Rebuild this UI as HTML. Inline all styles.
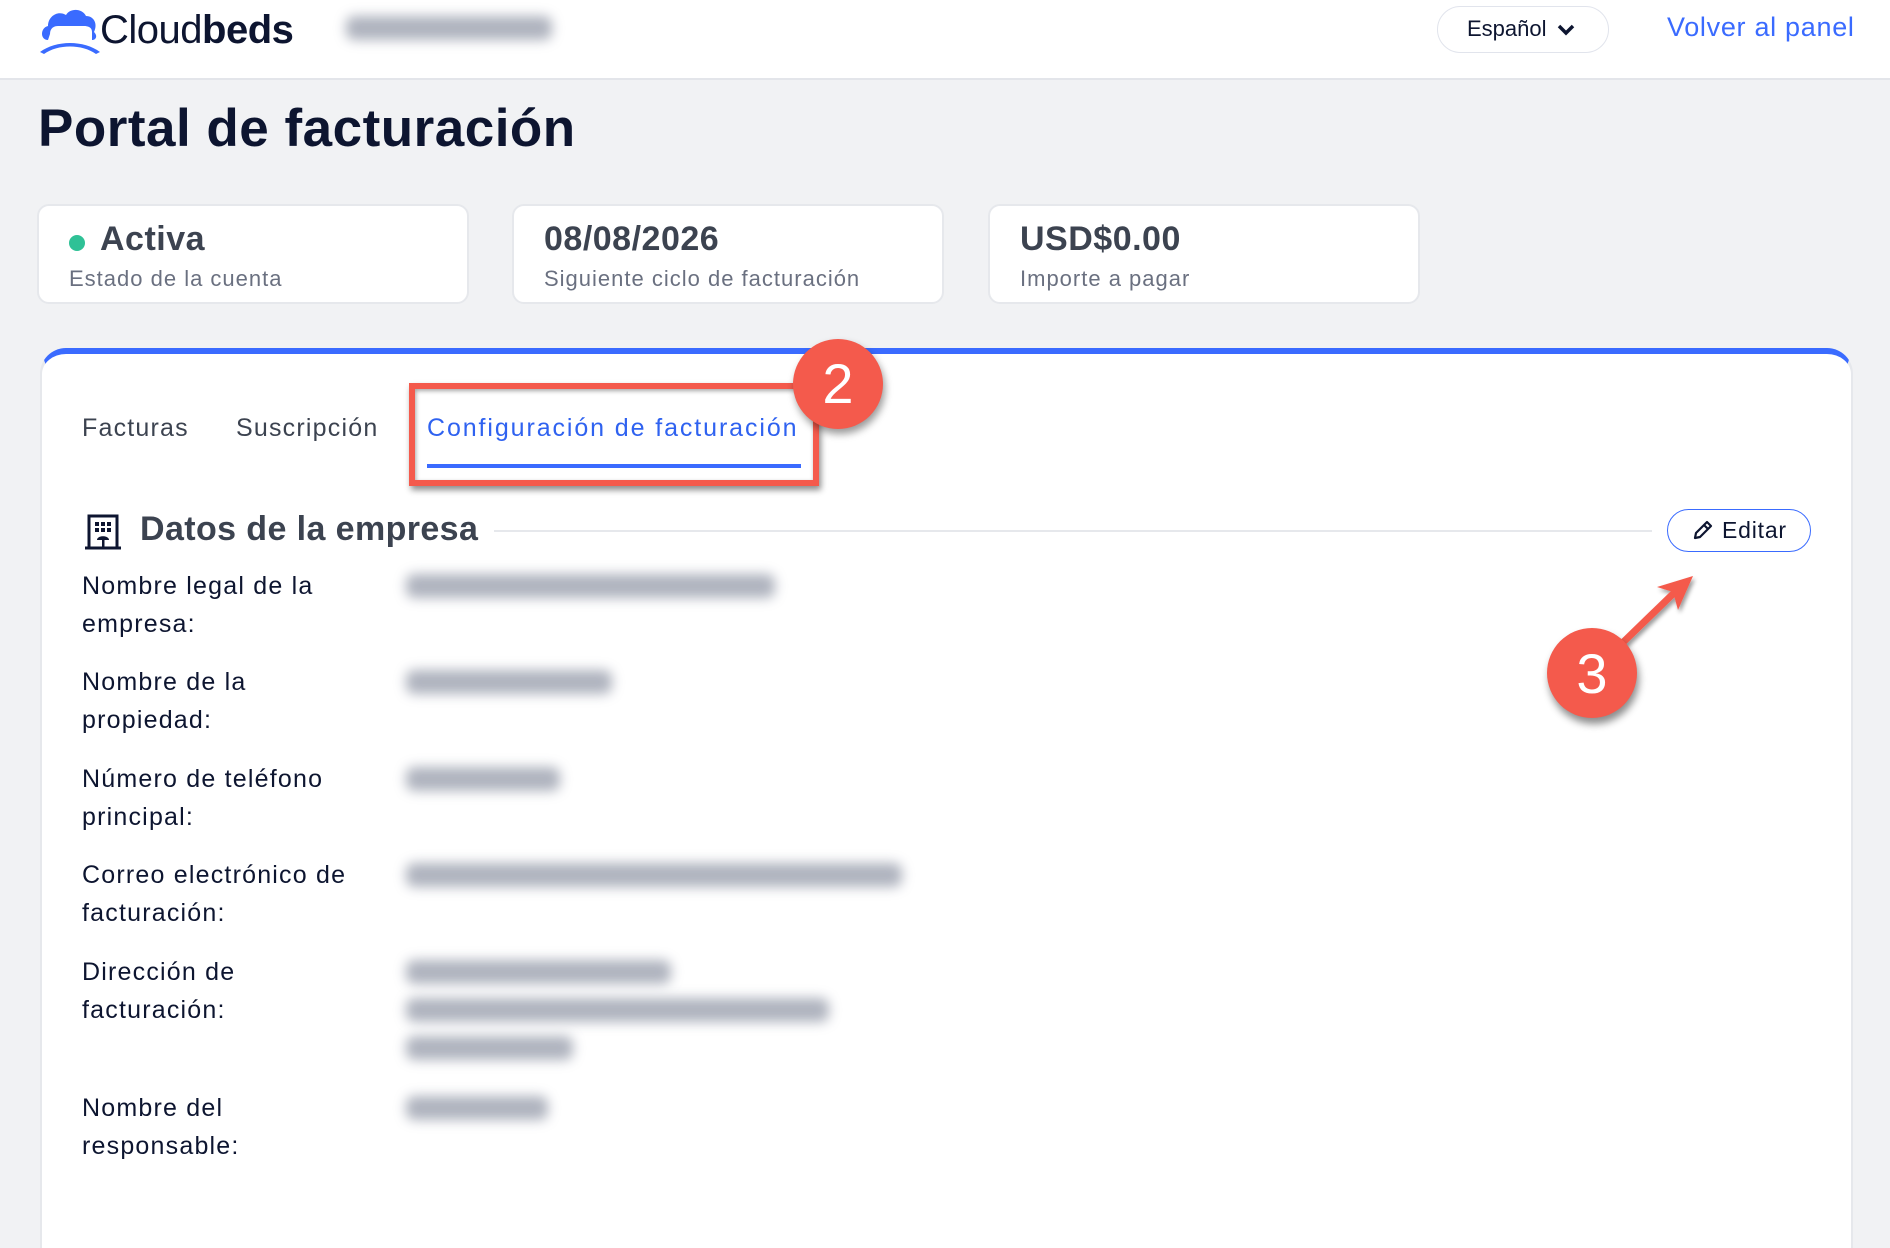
<!DOCTYPE html>
<html><head><meta charset="utf-8"><style>
*{margin:0;padding:0;box-sizing:border-box}
body{width:1890px;height:1174px;overflow:hidden;background:#f1f2f4;font-family:"Liberation Sans",sans-serif;position:relative;color:#0d1530}
.abs{position:absolute}
.hdr{left:0;top:0;width:1890px;height:80px;background:#fff;border-bottom:2px solid #e3e5ea}
.blur{position:absolute;background:#8d93a3;border-radius:8px;filter:blur(6px);opacity:.7}
.card{position:absolute;top:204px;width:432px;height:100px;background:#fff;border:2px solid #e6e8ec;border-radius:12px}
.card .v{position:absolute;left:30px;top:14px;font-size:34px;font-weight:bold;color:#3c4350;letter-spacing:.5px}
.card .l{position:absolute;left:30px;top:60px;font-size:22px;color:#6a7080;letter-spacing:1px}
.lbl{position:absolute;left:82px;font-size:25px;line-height:38px;color:#0d1530;letter-spacing:1.2px}
.tab{position:absolute;top:414px;font-size:25px;color:#3c4350;letter-spacing:1.2px}
</style></head><body>
<div class="abs hdr"></div>
<svg class="abs" style="left:38px;top:6px" width="64" height="48" viewBox="0 0 64 48">
<path d="M10 34 C2 34 2 22 10 20 C10 10 20 4 28 9 C32 2 44 2 48 10 C56 10 60 18 56 26 C60 30 58 34 54 34 L54 26 C54 20 48 20 44 20 L20 20 C16 20 12 22 12 28 Z" fill="#3a6bff"/>
<path d="M2 46 C18 34 46 34 62 46 L58 48 C44 38 20 38 6 48 Z" fill="#3a6bff"/>
</svg>
<div class="abs" style="left:100px;top:8px;font-size:40px;letter-spacing:-0.5px;color:#0d1530">Cloud<b>beds</b></div>
<div class="blur" style="left:346px;top:16px;width:206px;height:24px"></div>
<div class="abs" style="left:1437px;top:6px;width:172px;height:47px;border:1.5px solid #e1e4ec;border-radius:24px;font-size:22px;line-height:44px;padding-left:29px;color:#0d1530">Español <svg width="18" height="12" viewBox="0 0 18 12" style="margin-left:4px"><path d="M2 2 L9 9 L16 2" stroke="#0d1530" stroke-width="3.5" fill="none"/></svg></div>
<div class="abs" style="left:1667px;top:12px;font-size:27px;color:#3a6bff;letter-spacing:.7px">Volver al panel</div>
<div class="abs" style="left:38px;top:98px;font-size:53px;font-weight:bold;color:#0d1530;letter-spacing:.5px">Portal de facturación</div>
<div class="card" style="left:37px"><div class="abs" style="left:30px;top:29px;width:16px;height:16px;border-radius:50%;background:#2fc196"></div><div class="v" style="left:61px">Activa</div><div class="l">Estado de la cuenta</div></div>
<div class="card" style="left:512px"><div class="v">08/08/2026</div><div class="l">Siguiente ciclo de facturación</div></div>
<div class="card" style="left:988px"><div class="v">USD$0.00</div><div class="l">Importe a pagar</div></div>
<div class="abs" style="left:40px;top:348px;width:1813px;height:900px;background:#fff;border-top:6px solid #3a6bff;border-radius:26px 26px 0 0;border-right:2px solid #e6e8ec;border-left:2px solid #e6e8ec"></div>
<div class="tab" style="left:82px">Facturas</div>
<div class="tab" style="left:236px">Suscripción</div>
<div class="tab" style="left:427px;color:#2f62f0;letter-spacing:1.9px">Configuración de facturación</div>
<div class="abs" style="left:427px;top:464px;width:374px;height:4px;background:#3a6bff"></div>
<div class="abs" style="left:409px;top:383px;width:410px;height:103px;border:6px solid #f45a4c;box-shadow:2px 4px 6px rgba(0,0,0,.45),inset 1px 2px 4px rgba(0,0,0,.35)"></div>
<div class="abs" style="left:793px;top:339px;width:90px;height:90px;border-radius:50%;background:#f45a4c;box-shadow:2px 5px 8px rgba(0,0,0,.4);color:#fff;font-size:56px;text-align:center;line-height:90px">2</div>
<svg class="abs" style="left:84px;top:514px" width="38" height="36" viewBox="0 0 38 36"><rect x="5" y="2" width="28" height="32" fill="none" stroke="#0d1530" stroke-width="3"/><line x1="1" y1="34" x2="37" y2="34" stroke="#0d1530" stroke-width="3"/><g fill="#0d1530"><rect x="11" y="8" width="4" height="4"/><rect x="17" y="8" width="4" height="4"/><rect x="23" y="8" width="4" height="4"/><rect x="11" y="14" width="4" height="4"/><rect x="17" y="14" width="4" height="4"/><rect x="23" y="14" width="4" height="4"/><path d="M13 26 C13 21 25 21 25 26 Z"/><rect x="18" y="25" width="2.5" height="9"/></g></svg>
<div class="abs" style="left:140px;top:510px;font-size:34px;font-weight:bold;color:#3c4350;letter-spacing:.4px">Datos de la empresa</div>
<div class="abs" style="left:494px;top:530px;width:1158px;height:2px;background:#e6e8ec"></div>
<div class="abs" style="left:1667px;top:509px;width:144px;height:43px;border:1.5px solid #3a6bff;border-radius:22px;font-size:23px;line-height:40px;padding-left:24px;color:#0d1530;letter-spacing:.8px"><svg width="22" height="22" viewBox="0 0 22 22" style="vertical-align:-3px;margin-right:8px"><path d="M3 19 L4 14 L15 3 L19 7 L8 18 Z M12 6 L16 10" stroke="#0d1530" stroke-width="2.2" fill="none" stroke-linejoin="round"/></svg>Editar</div>
<svg class="abs" style="left:1580px;top:570px" width="130" height="120" viewBox="0 0 130 120"><defs><filter id="s"><feDropShadow dx="2" dy="3" stdDeviation="2" flood-opacity=".4"/></filter></defs><g filter="url(#s)"><line x1="30" y1="85" x2="95" y2="22" stroke="#f45a4c" stroke-width="7"/><path d="M113 6 L77 17 L93 22 L98 40 Z" fill="#f45a4c"/></g></svg>
<div class="abs" style="left:1547px;top:628px;width:90px;height:90px;border-radius:50%;background:#f45a4c;box-shadow:2px 6px 8px rgba(0,0,0,.45);color:#fff;font-size:56px;text-align:center;line-height:92px">3</div>
<div class="lbl" style="top:567px">Nombre legal de la<br>empresa:</div>
<div class="lbl" style="top:663px">Nombre de la<br>propiedad:</div>
<div class="lbl" style="top:760px">Número de teléfono<br>principal:</div>
<div class="lbl" style="top:856px">Correo electrónico de<br>facturación:</div>
<div class="lbl" style="top:953px">Dirección de<br>facturación:</div>
<div class="lbl" style="top:1089px">Nombre del<br>responsable:</div>
<div class="blur" style="left:406px;top:574px;width:369px;height:24px"></div>
<div class="blur" style="left:406px;top:670px;width:206px;height:24px"></div>
<div class="blur" style="left:406px;top:767px;width:154px;height:24px"></div>
<div class="blur" style="left:406px;top:863px;width:496px;height:24px"></div>
<div class="blur" style="left:406px;top:960px;width:265px;height:24px"></div>
<div class="blur" style="left:406px;top:998px;width:423px;height:24px"></div>
<div class="blur" style="left:406px;top:1036px;width:167px;height:24px"></div>
<div class="blur" style="left:406px;top:1096px;width:142px;height:24px"></div>
</body></html>
